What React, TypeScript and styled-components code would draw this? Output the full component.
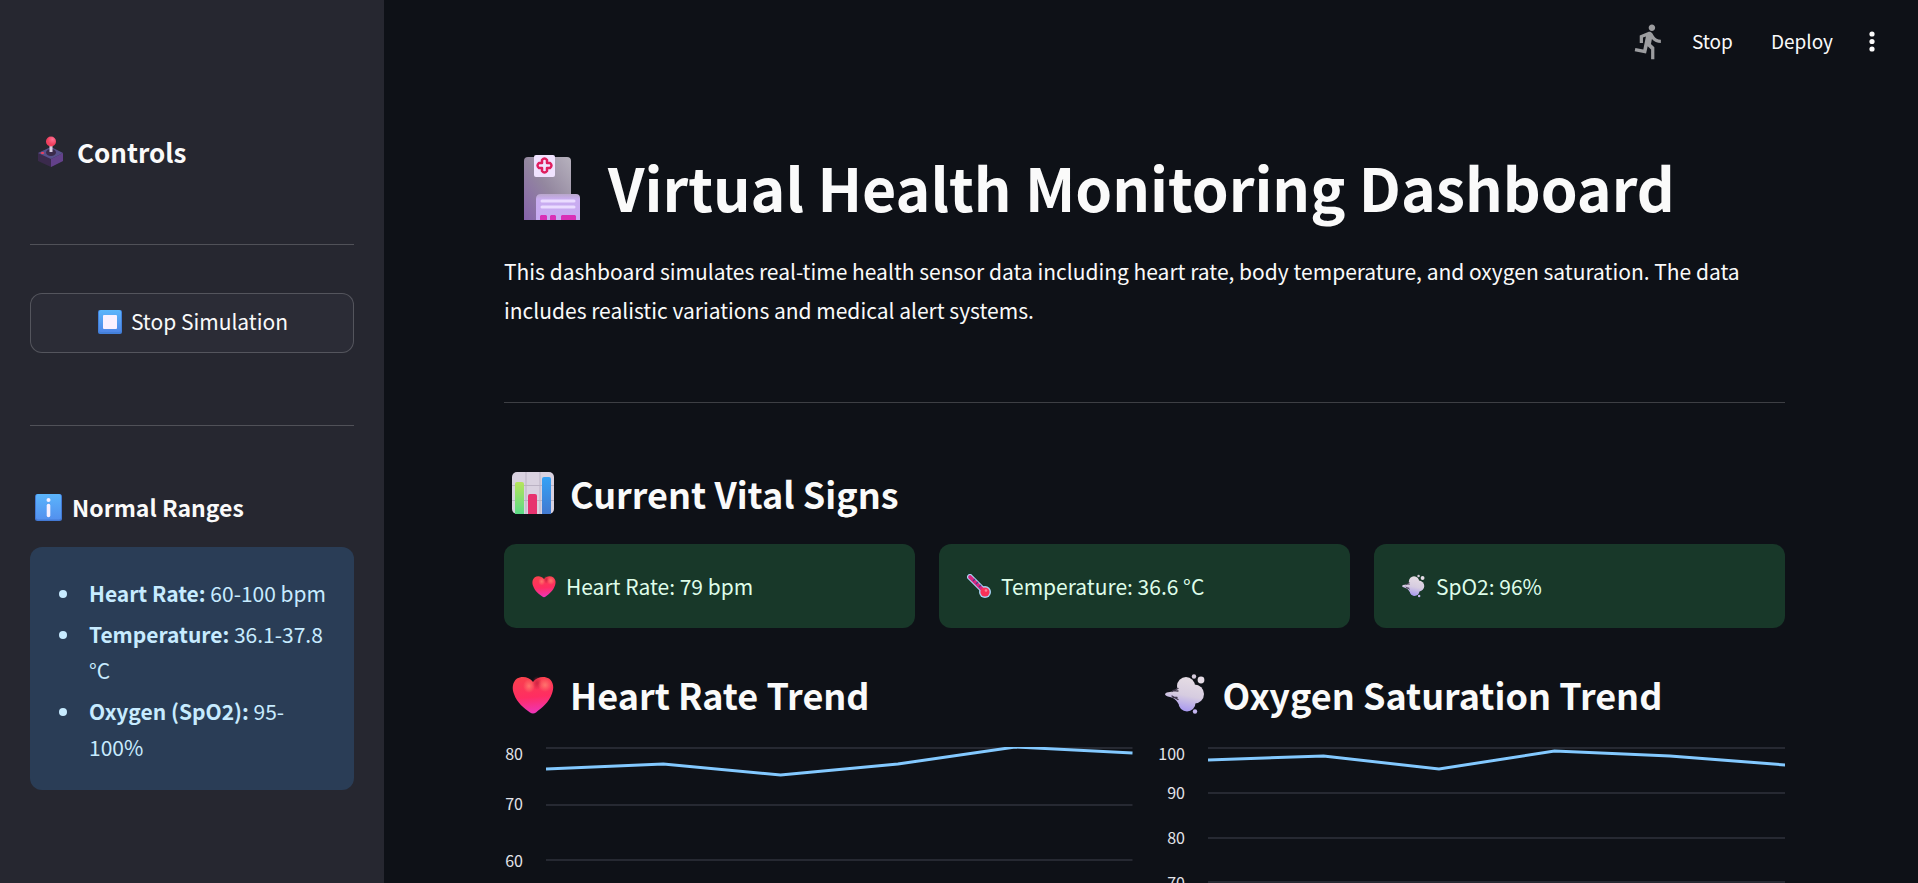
import React, { useId } from "react";
import styled, { createGlobalStyle } from "styled-components";

const GlobalStyle = createGlobalStyle`
  * { box-sizing: border-box; }
  body {
    margin: 0;
    background: #0e1117;
    color: #fafafa;
    font-family: "Noto Sans CJK SC", "Noto Sans", sans-serif;
    font-size: 21px;
    line-height: 39px;
  }
  h1, h2, h3, p, ul { margin: 0; padding: 0; }
`;

const Shell = styled.div`
  display: flex;
  height: 100vh;
  overflow: hidden;
`;

const Sidebar = styled.aside`
  flex: 0 0 384px;
  padding: 132px 30px 0;
  background: #262730;
  overflow: hidden;
`;

const Rule = styled.hr<{ $top: number; $bottom: number }>`
  height: 1px;
  border: 0;
  margin: ${(p) => p.$top}px 0 ${(p) => p.$bottom}px;
  background: rgba(250, 250, 250, 0.2);
`;

const Heading = styled.h2<{ $size: number; $line: number; $gap: number; $indent: number }>`
  display: flex;
  align-items: center;
  gap: ${(p) => p.$gap}px;
  padding-left: ${(p) => p.$indent}px;
  font-size: ${(p) => p.$size}px;
  line-height: ${(p) => p.$line}px;
  font-weight: 700;
  white-space: nowrap;
`;

const SimButton = styled.button`
  display: flex;
  align-items: center;
  justify-content: center;
  gap: 9px;
  width: 100%;
  height: 60px;
  padding: 0 0 3px 2px;
  border: 1px solid rgba(250, 250, 250, 0.2);
  border-radius: 12px;
  background: #2b2c36;
  color: #fafafa;
  font: inherit;
  cursor: pointer;
`;

const InfoBox = styled.section`
  margin-top: 20px;
  padding: 28px 24px 20px;
  border-radius: 12px;
  background: #2a3d56;
  color: #c7ebff;
`;

const RangeList = styled.ul`
  padding-left: 5px;
  line-height: 36px;
  list-style: none;
`;

const RangeItem = styled.li`
  display: flex;
  gap: 22px;
  margin-bottom: 5px;

  &::before {
    content: "";
    flex: none;
    width: 8px;
    height: 8px;
    margin-top: 15px;
    border-radius: 50%;
    background: #c7ebff;
  }
`;

const Page = styled.div`
  display: flex;
  flex: 1;
  flex-direction: column;
  min-width: 0;
  overflow: hidden;
`;

const TopBar = styled.header`
  display: flex;
  flex: 0 0 90px;
  align-items: flex-start;
  justify-content: flex-end;
  padding: 22px 36px 0 0;
`;

const BarButton = styled.button<{ $gap: number }>`
  height: 38px;
  padding: 0;
  margin-left: ${(p) => p.$gap}px;
  border: 0;
  background: none;
  color: #fafafa;
  font: inherit;
  font-size: 19px;
  line-height: 38px;
  cursor: pointer;
`;

const MenuButton = styled(BarButton)`
  display: flex;
  align-items: center;
  justify-content: center;
  width: 20px;
`;

const Content = styled.main`
  padding: 52px 133px 0 120px;
`;

const Title = styled.h1`
  display: flex;
  align-items: center;
  gap: 27px;
  padding-left: 20px;
  font-size: 59px;
  line-height: 90px;
  font-weight: 700;
  white-space: nowrap;
`;

const Intro = styled.p`
  padding-top: 20px;
`;

const Cards = styled.div`
  display: grid;
  grid-template-columns: repeat(3, 1fr);
  gap: 24px;
  margin: 19px 0 34px;
`;

const Card = styled.div`
  display: flex;
  align-items: center;
  gap: 10px;
  height: 84px;
  padding: 0 28px;
  border-radius: 12px;
  background: #183829;
  color: #dffde9;
`;

const Trends = styled.div`
  display: grid;
  grid-template-columns: repeat(2, 1fr);
  gap: 24px;
`;

const ChartRow = styled.div`
  display: flex;
  margin-top: 21px;
`;

const Axis = styled.svg`
  flex: none;
  overflow: visible;
  font-size: 16px;
  fill: #e3e4ea;
`;

const Plot = styled.svg`
  flex: 1;
  min-width: 0;
`;

function JoystickIcon() {
  const id = useId();
  return (
    <svg width="30" height="32" viewBox="0 0 30 32" aria-hidden="true">
      <defs>
        <radialGradient id={id} cx=".65" cy=".3"><stop stopColor="#ff6f92" /><stop offset="1" stopColor="#f0405e" /></radialGradient>
      </defs>
      <path d="M2 17 15 11l12 6v8l-12 6-13-6z" fill="#3a2a4c" />
      <path d="m15 23 12-6v8l-12 6z" fill="#63418a" />
      <path d="m2 17 13-6 12 6-12 6z" fill="#57508a" />
      <ellipse cx="15" cy="16.500" rx="5" ry="3.500" fill="#3b2b4b" />
      <path d="M13.500 9h3v7h-3z" fill="#d9cfe4" />
      <ellipse cx="6.500" cy="17" rx="1.800" ry="1" fill="#f0405e" />
      <circle cx="15" cy="5.500" r="5" fill={`url(#${id})`} />
    </svg>
  );
}

function StopIcon() {
  const id = useId();
  return (
    <svg width="24" height="24" viewBox="0 0 24 24" aria-hidden="true">
      <linearGradient id={id} x2="0" y2="1"><stop stopColor="#5db6fb" /><stop offset="1" stopColor="#4f87e8" /></linearGradient>
      <rect width="24" height="24" rx="2" fill="#4380da" />
      <rect x="1" width="22" height="22" rx="2" fill={`url(#${id})`} />
      <rect x="5" y="5" width="14" height="14" rx="1" fill="#faf0ff" />
    </svg>
  );
}

function InfoIcon() {
  const id = useId();
  return (
    <svg width="27" height="27" viewBox="0 0 27 27" aria-hidden="true">
      <linearGradient id={id} x2="0" y2="1"><stop stopColor="#5bb5fc" /><stop offset="1" stopColor="#5390ee" /></linearGradient>
      <rect width="27" height="27" rx="2.500" fill="#4379d4" />
      <rect x="1" width="25" height="25.500" rx="2" fill={`url(#${id})`} />
      <circle cx="13.500" cy="6" r="2" fill="#f6efff" />
      <path d="M13.500 11.500v10" stroke="#f6efff" strokeWidth="3.600" strokeLinecap="round" />
    </svg>
  );
}

function HospitalIcon() {
  const id = useId();
  return (
    <svg width="57" height="66" viewBox="0 0 57 66" aria-hidden="true">
      <defs>
        <linearGradient id={id + "w"} x1="1" x2="0" y2="1"><stop stopColor="#b7b2be" /><stop offset=".5" stopColor="#93879f" /><stop offset="1" stopColor="#8562ab" /></linearGradient>
        <linearGradient id={id + "f"} x2="0" y2="1"><stop stopColor="#b9a7cc" /><stop offset=".2" stopColor="#c9adf0" /><stop offset="1" stopColor="#c8aaf2" /></linearGradient>
      </defs>
      <path d="M0 66V7q0-4 4-4h39q4 0 4 4v59z" fill={`url(#${id}w)`} />
      <path d="M12 66V45q0-5 5-5h35q4 0 4 4v22z" fill={`url(#${id}f)`} />
      <path d="M18 47h32M18 53h32" stroke="#eadcff" strokeWidth="3" strokeLinecap="round" />
      <path d="M16 66v-4l1-1h5l1 1v4zM26 66v-4l1-1h4l1 1v4zM37 66v-4l1-1h13l1 1v4z" fill="#d930b7" />
      <rect x="10" y="1" width="21" height="22" rx="2" fill="#f0e3ff" />
      <path d="M18 9V6q2.500-3 5 0v3h3q3 2.500 0 5h-3v3q-2.500 3-5 0v-3h-3q-3-2.500 0-5z" fill="none" stroke="#e01e5f" strokeWidth="2.500" strokeLinejoin="round" />
    </svg>
  );
}

function ChartIcon() {
  const id = useId();
  return (
    <svg width="42" height="42" viewBox="0 0 42 42" aria-hidden="true">
      <defs>
        <linearGradient id={id + "g"} x2="0" y2="1"><stop stopColor="#b7e45c" /><stop offset="1" stopColor="#5bda86" /></linearGradient>
        <linearGradient id={id + "b"} x2="0" y2="1"><stop stopColor="#35a2f6" /><stop offset="1" stopColor="#4279d0" /></linearGradient>
      </defs>
      <rect width="42" height="42" rx="5" fill="#d9d2e0" />
      <path d="M14 0v42M28 0v42M0 13.500h42M0 28.500h42" stroke="#bbb3c4" />
      <path d="M3 42V12q0-2 2-2h5q2 0 2 2v30z" fill={`url(#${id}g)`} />
      <path d="M16 42V24q0-2 2-2h5q2 0 2 2v18z" fill="#e7336f" />
      <path d="M30 42V7q0-2 2-2h5q2 0 2 2v35z" fill={`url(#${id}b)`} />
    </svg>
  );
}

function HeartIcon({ size }: { size: number }) {
  const id = useId();
  return (
    <svg width={size} height={size} viewBox="0 0 42 42" aria-hidden="true">
      <defs>
        <linearGradient id={id + "a"} x1=".4" x2=".5" y2="1"><stop stopColor="#f9414d" /><stop offset=".55" stopColor="#ff2d62" /><stop offset="1" stopColor="#ee35ba" /></linearGradient>
        <radialGradient id={id + "b"} cx=".5" cy=".5" r=".5"><stop stopColor="#ff746c" /><stop offset="1" stopColor="#ff746c" stopOpacity="0" /></radialGradient>
        <radialGradient id={id + "c"} cx=".5" cy=".5" r=".5"><stop stopColor="#c51f3f" stopOpacity=".8" /><stop offset="1" stopColor="#c51f3f" stopOpacity="0" /></radialGradient>
      </defs>
      <path d="M21 9C25 3 33 3 37 5.500c5 4 5 10 3 15-3 9-10 14-16 19q-3 2-6 0C12 35 5 30 2 21 0 16 0 9.500 5 5.500c4-2.500 12-2.500 16 3.500z" fill={`url(#${id}a)`} />
      <ellipse cx="25" cy="10" rx="5" ry="7" fill={`url(#${id}c)`} />
      <ellipse cx="33" cy="12" rx="7" ry="7" fill={`url(#${id}b)`} />
      <ellipse cx="17" cy="13" rx="6" ry="7" fill={`url(#${id}b)`} />
    </svg>
  );
}

function ThermometerIcon() {
  return (
    <svg width="24" height="24" viewBox="0 0 24 24" aria-hidden="true">
      <path d="M3 3 17 17" stroke="#a9d3f5" strokeWidth="6" strokeLinecap="round" />
      <circle cx="18" cy="18" r="6" fill="#a9d3f5" />
      <path d="M3 3 17 17" stroke="#d92580" strokeWidth="3.800" strokeLinecap="round" />
      <circle cx="18" cy="18" r="4.600" fill="#fb3158" />
      <circle cx="19" cy="16.500" r="1.300" fill="#ff8296" />
      <path d="m8 5-2 2M11 8 9 10M14 11l-2 2" stroke="#4a3f86" strokeWidth="1.300" />
    </svg>
  );
}

function BreathIcon({ size }: { size: number }) {
  const id = useId();
  return (
    <svg width={size} height={size} viewBox="0 0 42 42" aria-hidden="true">
      <linearGradient id={id} gradientUnits="userSpaceOnUse" x1="26" x2="19" y1="4" y2="38"><stop stopColor="#e6dde4" /><stop offset=".55" stopColor="#d6cce0" /><stop offset="1" stopColor="#a898f0" /></linearGradient>
      <g fill={`url(#${id})`}>
        <path d="M0 21q1-2 5-2 6-1 9-6l14-3 4 18-11 10q-5-3-8-8-3-5-8-6-5-1-5-3z" />
        <circle cx="21" cy="13" r="9" />
        <circle cx="29.500" cy="21" r="9.500" />
        <circle cx="22" cy="30" r="8.500" />
      </g>
      <path d="m7 18.500 6-3M8 17.500l5 .5M7 23l6 3.500M8 24.500h4" stroke="#3f374a" strokeWidth="1.300" strokeLinecap="round" />
      <circle cx="36" cy="7" r="3.400" fill="#e5dce6" />
      <circle cx="29" cy="3.500" r="2.200" fill="#d5cadb" />
      <circle cx="30" cy="38.500" r="2.200" fill="#c4b5f0" />
    </svg>
  );
}

function RunnerIcon() {
  return (
    <svg width="39" height="39" viewBox="0 0 24 24" fill="#9c9da0" aria-hidden="true">
      <path d="M13.490 5.480c1.100 0 2-.9 2-2s-.9-2-2-2-2 .9-2 2 .9 2 2 2zm-3.600 13.900 1-4.400 2.100 2v6h2v-7.500l-2.100-2 .6-3c1.300 1.500 3.300 2.500 5.500 2.500v-2c-1.900 0-3.500-1-4.300-2.400l-1-1.600c-.4-.6-1-1-1.700-1-.3 0-.5.1-.8.1l-5.200 2.200v4.700h2v-3.400l1.800-.7-1.600 8.100-4.900-1-.4 2 7 1.400z" />
    </svg>
  );
}

type Tick = { label: string; grid: number; text: number };

type TrendProps = {
  title: string;
  icon: React.ReactNode;
  axisWidth: number;
  labelEnd: number;
  ticks: Tick[];
  samples: number[];
};

const PLOT_HEIGHT = 300;

function Trend({ title, icon, axisWidth, labelEnd, ticks, samples }: TrendProps) {
  const step = 500 / (samples.length - 1);
  const points = samples.map((y, i) => `${i * step},${y}`).join(" ");
  return (
    <section>
      <Heading $size={36} $line={64} $gap={16} $indent={8}>{icon}{title}</Heading>
      <ChartRow>
        <Axis width={axisWidth} height={PLOT_HEIGHT}>
          {ticks.map((t) => (
            <text key={t.label} x={labelEnd} y={t.text} textAnchor="end">{t.label}</text>
          ))}
        </Axis>
        <Plot height={PLOT_HEIGHT} viewBox={`0 0 500 ${PLOT_HEIGHT}`} preserveAspectRatio="none" role="img" aria-label={title}>
          {ticks.map((t) => (
            <rect key={t.label} x="0" y={t.grid} width="500" height="2" fill="#262932" />
          ))}
          <polyline points={points} fill="none" stroke="#83c9ff" strokeWidth="3" vectorEffect="non-scaling-stroke" />
        </Plot>
      </ChartRow>
    </section>
  );
}

const heartTicks: Tick[] = [
  { label: "80", grid: 0, text: 13 },
  { label: "70", grid: 57, text: 63 },
  { label: "60", grid: 112, text: 120 },
];

const oxygenTicks: Tick[] = [
  { label: "100", grid: 0, text: 13 },
  { label: "90", grid: 45, text: 52 },
  { label: "80", grid: 90, text: 97 },
  { label: "70", grid: 134, text: 142 },
];

const ranges = [
  ["Heart Rate:", "60-100 bpm"],
  ["Temperature:", "36.1-37.8 °C"],
  ["Oxygen (SpO2):", "95-100%"],
];

export default function App() {
  return (
    <>
      <GlobalStyle />
      <Shell>
        <Sidebar>
          <Heading $size={26} $line={40} $gap={11} $indent={6}><JoystickIcon />Controls</Heading>
          <Rule $top={72} $bottom={48} />
          <SimButton type="button"><StopIcon />Stop Simulation</SimButton>
          <Rule $top={72} $bottom={61} />
          <Heading as="h3" $size={23} $line={40} $gap={10} $indent={5}><InfoIcon />Normal Ranges</Heading>
          <InfoBox>
            <RangeList>
              {ranges.map(([name, value]) => (
                <RangeItem key={name}><span><strong>{name}</strong> {value}</span></RangeItem>
              ))}
            </RangeList>
          </InfoBox>
        </Sidebar>
        <Page>
          <TopBar>
            <RunnerIcon />
            <BarButton type="button" $gap={23}>Stop</BarButton>
            <BarButton type="button" $gap={38}>Deploy</BarButton>
            <MenuButton type="button" $gap={29} aria-label="Main menu">
              <svg width="6" height="21" viewBox="0 0 6 21" fill="#fafafa" aria-hidden="true">
                <circle cx="3" cy="3" r="2.600" /><circle cx="3" cy="10.500" r="2.600" /><circle cx="3" cy="18" r="2.600" />
              </svg>
            </MenuButton>
          </TopBar>
          <Content>
            <Title><HospitalIcon />Virtual Health Monitoring Dashboard</Title>
            <Intro>
              This dashboard simulates real-time health sensor data including heart rate, body temperature, and oxygen saturation. The data includes realistic variations and medical alert systems.
            </Intro>
            <Rule $top={72} $bottom={58} />
            <Heading $size={36} $line={64} $gap={16} $indent={8}><ChartIcon />Current Vital Signs</Heading>
            <Cards>
              <Card><HeartIcon size={24} />Heart Rate: 79 bpm</Card>
              <Card><ThermometerIcon />Temperature: 36.6 °C</Card>
              <Card><BreathIcon size={24} />SpO2: 96%</Card>
            </Cards>
            <Trends>
              <Trend title="Heart Rate Trend" icon={<HeartIcon size={42} />} axisWidth={42} labelEnd={19} ticks={heartTicks} samples={[22, 17, 28, 17, 0, 6]} />
              <Trend title="Oxygen Saturation Trend" icon={<BreathIcon size={42} />} axisWidth={51} labelEnd={28} ticks={oxygenTicks} samples={[13, 9, 22, 4, 9, 18]} />
            </Trends>
          </Content>
        </Page>
      </Shell>
    </>
  );
}
